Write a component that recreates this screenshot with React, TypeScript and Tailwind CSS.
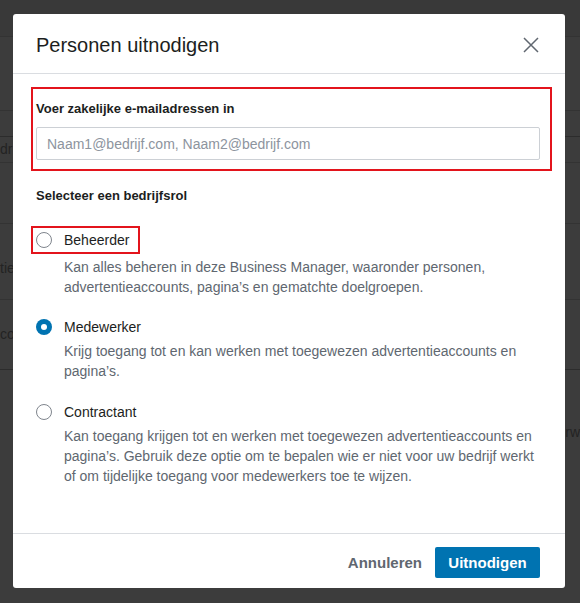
import React from "react";

const roles = [
  {
    id: "admin",
    label: "Beheerder",
    lines: [
      "Kan alles beheren in deze Business Manager, waaronder personen,",
      "advertentieaccounts, pagina’s en gematchte doelgroepen.",
    ],
  },
  {
    id: "employee",
    label: "Medewerker",
    lines: [
      "Krijg toegang tot en kan werken met toegewezen advertentieaccounts en",
      "pagina’s.",
    ],
  },
  {
    id: "contractor",
    label: "Contractant",
    lines: [
      "Kan toegang krijgen tot en werken met toegewezen advertentieaccounts en",
      "pagina’s. Gebruik deze optie om te bepalen wie er niet voor uw bedrijf werkt",
      "of om tijdelijke toegang voor medewerkers toe te wijzen.",
    ],
  },
];

function Radio({ checked }: { checked: boolean }) {
  if (checked) {
    return (
      <span className="flex h-4 w-4 shrink-0 items-center justify-center rounded-full bg-[#0073b1]">
        <span className="h-[6px] w-[6px] rounded-full bg-white" />
      </span>
    );
  }
  return <span className="h-4 w-4 shrink-0 rounded-full border border-[#7f858d] bg-white" />;
}

function Backdrop() {
  return (
    <div className="flex h-full flex-col bg-[#3c3c3c] text-[14px] text-[#232323]">
      <div className="h-[37px] shrink-0 border-b border-[#333333] bg-[#393939]" />
      <div className="h-[74px] shrink-0 border-b border-[#333333]" />
      <div className="h-[26px] shrink-0 border-b border-[#2c2c2c]" />
      <div className="flex h-[26px] shrink-0 items-center border-b border-[#333333]">
        <span>dr</span>
      </div>
      <div className="h-[61px] shrink-0 border-b border-[#333333]" />
      <div className="flex h-[76px] shrink-0 items-end border-b border-[#333333] pb-[20px]">
        <span>tie</span>
      </div>
      <div className="flex h-[70px] shrink-0 items-center border-b border-[#2c2c2c]">
        <span>co</span>
      </div>
      <div className="flex flex-1 justify-end pt-[52px]">
        <span>rw</span>
      </div>
    </div>
  );
}

export default function App() {
  const selected = "employee";

  return (
    <div
      className="relative h-[603px] w-full overflow-hidden"
      style={{ fontFamily: '"Liberation Sans", Arial, sans-serif' }}
    >
      <Backdrop />

      <div className="absolute left-[13px] top-[14px] w-[552px] rounded-[3px] bg-white text-[#1c1e21]">
        <div className="flex h-[60px] items-center justify-between border-b border-[#dadde1] pl-[23px] pr-[26px] pt-[2px]">
          <h2 className="text-[20px] font-normal">Personen uitnodigen</h2>
          <svg width="16" height="16" viewBox="0 0 16 16" fill="none">
            <path d="M1 1L15 15M15 1L1 15" stroke="#606770" strokeWidth="1.5" />
          </svg>
        </div>

        <div className="px-[23px] pb-[47px] pt-[13px]">
          <div className="-ml-[5px] w-[521px] border-2 border-[#e3141c] pb-[9px] pl-[3px] pr-[10px] pt-[10px]">
            <label className="block text-[13px] font-bold leading-5">
              Voer zakelijke e-mailadressen in
            </label>
            <input
              className="mt-[8px] block h-[33px] w-full rounded-[2px] border border-[#ccd0d5] px-[10px] pt-[1px] text-[14px] outline-none placeholder:text-[#8d949e]"
              placeholder="Naam1@bedrijf.com, Naam2@bedrijf.com"
            />
          </div>

          <p className="mt-[15px] text-[13px] font-bold leading-5">Selecteer een bedrijfsrol</p>

          <div className="mt-[20px] flex flex-col">
            {roles.map((role, i) => {
              const row = (
                <div className="flex items-center gap-3 text-[14px] leading-5">
                  <Radio checked={role.id === selected} />
                  <span>{role.label}</span>
                </div>
              );
              return (
                <div key={role.id} className={i === 0 ? "" : i === 1 ? "mt-[20px]" : "mt-[21px]"}>
                  {i === 0 ? (
                    <div className="-ml-[5px] w-[109px] border-2 border-[#e3141c] py-[2px] pl-[3px]">
                      {row}
                    </div>
                  ) : (
                    row
                  )}
                  <p className={`pl-[28px] text-[14px] leading-5 text-[#606770] ${i === 0 ? "mt-[3px]" : "mt-1"}`}>
                    {role.lines.map((line, j) => (
                      <React.Fragment key={j}>
                        {line}
                        {j < role.lines.length - 1 && <br />}
                      </React.Fragment>
                    ))}
                  </p>
                </div>
              );
            })}
          </div>
        </div>

        <div className="flex h-[55px] items-start justify-end gap-[13px] border-t border-[#dadde1] pr-[25px] pt-[13px]">
          <button className="h-[31px] pt-[1px] text-[15px] font-bold text-[#606770]">Annuleren</button>
          <button className="h-[31px] w-[105px] rounded-[2px] bg-[#0073b1] pt-[1px] text-[15px] font-bold text-white">
            Uitnodigen
          </button>
        </div>
      </div>
    </div>
  );
}
